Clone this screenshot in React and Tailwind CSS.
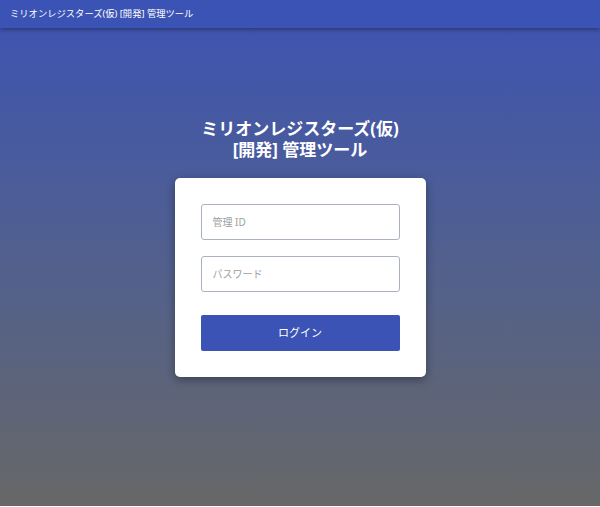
import React from 'react';

const font = { fontFamily: '"Noto Sans", "Noto Sans CJK JP", sans-serif' };

const App = () => {
  return (
    <div className="h-[506px] flex flex-col bg-gradient-to-b from-[#3d52b3] to-[#676767]" style={font}>
      {/* Header */}
      <header className="h-[28px] shrink-0 bg-[#3b53b4] shadow-[0_2px_4px_rgba(0,0,0,0.3)] flex items-center px-[10px] z-10">
        <span className="text-[9.3px] text-white leading-none">ミリオンレジスターズ(仮) [開発] 管理ツール</span>
      </header>

      {/* Login */}
      <main className="flex flex-col items-center pt-[90px]">
        <h1 className="text-white font-bold text-[17px] leading-[21px] text-center">
          ミリオンレジスターズ(仮)
          <br />
          [開発] 管理ツール
        </h1>

        <div className="mt-[18px] w-[251px] bg-white rounded-[5px] shadow-[0_3px_10px_rgba(0,0,0,0.35)] px-[26px] pt-[26px] pb-[26px]">
          <input
            type="text"
            placeholder="管理 ID"
            className="w-full h-[36px] border border-[#aab2c0] rounded-[3px] px-[11px] text-[10px] placeholder:text-[#9e9e9e] outline-none"
          />
          <input
            type="password"
            placeholder="パスワード"
            className="mt-[16px] w-full h-[36px] border border-[#aab2c0] rounded-[3px] px-[11px] text-[10px] placeholder:text-[#9e9e9e] outline-none"
          />
          <button className="mt-[23px] w-full h-[36px] bg-[#3b53b4] rounded-[2px] text-white text-[11px]">
            ログイン
          </button>
        </div>
      </main>
    </div>
  );
};

export default App;
